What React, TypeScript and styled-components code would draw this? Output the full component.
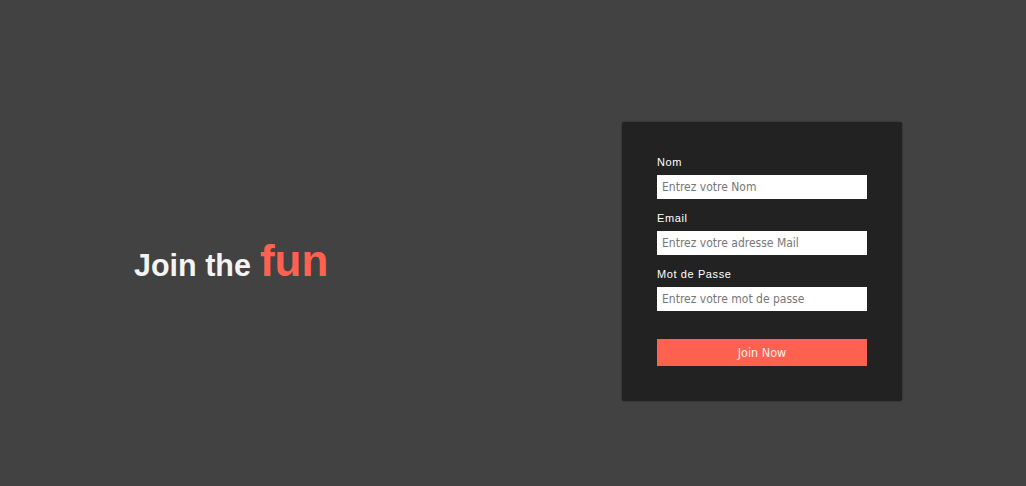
import styled, { createGlobalStyle } from 'styled-components'

const GlobalStyle = createGlobalStyle`
    html, body {
        margin: 0;
        padding: 0;
        background: #424242;
    }
`

const Page = styled.div`
    height: 486px;
    box-sizing: border-box;
    padding: 37px 124px 0 134px;
    display: flex;
    align-items: center;
    justify-content: space-between;
    background: #424242;
    font-family: 'Liberation Sans', Arial, sans-serif;
`

const Title = styled.h1`
    margin: 0;
    font-size: 30.5px;
    font-weight: 700;
    color: #f4f4f4;
    display: flex;
    align-items: baseline;
    gap: 9px;
    margin-bottom: 2px;
`

const Accent = styled.span`
    font-size: 44px;
    color: #ff6150;
`

const Card = styled.form`
    width: 280px;
    height: 279px;
    box-sizing: border-box;
    padding: 34px 35px 0 35px;
    background: #222222;
    border-radius: 2px;
    box-shadow: 0 0 2px rgba(0, 0, 0, 0.5);
    display: flex;
    flex-direction: column;
`

const Field = styled.div`
    display: flex;
    flex-direction: column;
    margin-bottom: 13px;
`

const Label = styled.label`
    font-size: 11px;
    letter-spacing: 0.6px;
    color: #ffffff;
    line-height: 12px;
    margin-bottom: 7px;
`

const Input = styled.input`
    width: 210px;
    height: 24px;
    box-sizing: border-box;
    border: none;
    outline: none;
    padding: 0 5px;
    font-family: 'DejaVu Sans Condensed', 'Liberation Sans', sans-serif;
    font-size: 12px;
    background: #fff;
    color: #333;

    &::placeholder {
        color: #777;
    }
`

const Button = styled.button`
    margin-top: 15px;
    width: 210px;
    height: 27px;
    border: none;
    background: #ff6150;
    color: #fbeeee;
    font-family: 'DejaVu Sans Condensed', 'Liberation Sans', sans-serif;
    font-size: 12.5px;
    cursor: pointer;
`

const fields = [
    { label: 'Nom', placeholder: 'Entrez votre Nom', type: 'text' },
    { label: 'Email', placeholder: 'Entrez votre adresse Mail', type: 'email' },
    { label: 'Mot de Passe', placeholder: 'Entrez votre mot de passe', type: 'password' },
]

export default function App() {
    return (
        <>
            <GlobalStyle />
            <Page>
                <Title>
                    Join the <Accent>fun</Accent>
                </Title>
                <Card onSubmit={(e) => e.preventDefault()}>
                    {fields.map((f) => (
                        <Field key={f.label}>
                            <Label>{f.label}</Label>
                            <Input type={f.type} placeholder={f.placeholder} />
                        </Field>
                    ))}
                    <Button type="submit">Join Now</Button>
                </Card>
            </Page>
        </>
    )
}
